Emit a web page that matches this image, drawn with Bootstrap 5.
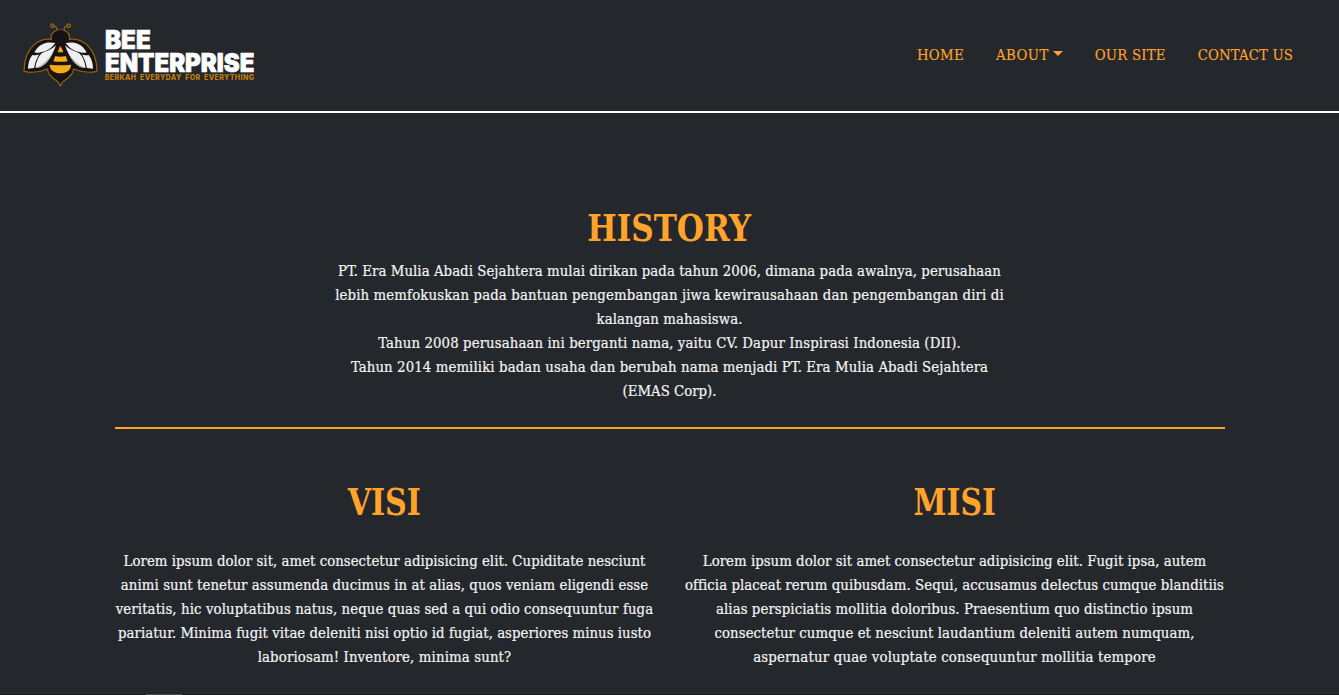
<!DOCTYPE html>
<html lang="id">
<head>
<meta charset="utf-8">
<meta name="viewport" content="width=device-width, initial-scale=1">
<title>Bee Enterprise</title>
<link href="https://cdn.jsdelivr.net/npm/bootstrap@5.3.0/dist/css/bootstrap.min.css" rel="stylesheet">
<style>
:root{--ink:#24272b;--honey:#ffa32b}
body{background:var(--ink);color:#f4f4f4;font-family:"DejaVu Serif Condensed","DejaVu Serif",serif;font-stretch:condensed;font-size:14.8px;line-height:24px;height:695px;overflow:hidden}
.site-nav{height:113px;border-bottom:2px solid #fff;padding:0 30px 0 10px}
.site-nav .nav{margin-top:43px}
.brand-logo{width:250px;height:90px;margin-top:10px;overflow:visible}
.site-nav .nav-link{color:var(--honey);padding:0 16px;font-size:14.8px;line-height:24px;letter-spacing:.2px;-webkit-text-stroke:.15px}
.site-nav .nav-home{letter-spacing:.3px}
.site-nav .nav-about{letter-spacing:.4px}
.site-nav .nav-contact{letter-spacing:.12px}
.site-nav .dropdown-toggle::after{margin-left:4px;vertical-align:4px;border-top-width:5px;border-left-width:5px;border-right-width:5px}
.section-title{font-weight:700;color:var(--honey);font-size:36.8px;line-height:48px;margin:0}
.section-title span{display:inline-block;transform:translateY(1px) scaleX(.94)}
.section-title .title-visi{transform:translateY(1px) scaleX(.91)}
.section-title .title-misi{transform:translateY(1px) scaleX(.9)}
.history{padding-top:90px}
.page-wrap{--bs-gutter-x:30px}
.page-wrap .row{--bs-gutter-x:30px}
.copy{-webkit-text-stroke:.2px}
.copy span{display:block;white-space:nowrap}
.rule{border:0;border-top:2px solid var(--honey);opacity:1;margin:24px 0 48px}
.s15{letter-spacing:0}.s17{letter-spacing:.03px}.s19{letter-spacing:.045px}.s20{letter-spacing:.05px}
.s22{letter-spacing:.075px}.s24{letter-spacing:.1px}.s28{letter-spacing:.13px}.s33{letter-spacing:.185px}
.page-foot{height:1px;background:#1b1b1d;padding-left:146px}
.page-foot div{width:36px;height:1px;background:#4c4c4e}
</style>
</head>
<body class="d-flex flex-column">
<nav class="site-nav d-flex justify-content-between align-items-start flex-shrink-0">
<a href="#" aria-label="Bee Enterprise">
<svg class="brand-logo d-block" viewBox="0 0 750 270">
<g stroke-linejoin="round" stroke-linecap="round">
<g fill="none" stroke="#94650f" stroke-width="4">
<circle cx="127" cy="47" r="5"/><circle cx="176" cy="47" r="5"/>
<path d="M132 49Q141 48 141 61M171 49Q162 48 162 61"/>
</g>
<path fill="#171413" stroke="#94650f" stroke-width="3.5" d="M124 88C117 50 185 50 178 88C211 83 260 107 261 184C239 189 218 188 190 177C191 195 171 206 160 214Q154 219 151 228Q148 219 142 214C131 206 112 195 113 177C87 188 65 189 42 184C43 107 91 83 124 88Z"/>
<circle cx="151" cy="85" r="25" fill="#171215"/>
<g fill="#f0f0f1">
<path d="M136 99C114 94 88 98 73 127Q82 130 92 127Q119 123 136 99Z"/>
<path d="M138 106C124 120 107 123 95 130Q81 143 76 173C103 174 125 144 138 106Z"/>
<path d="M67 135Q81 137 87 133Q77 150 72 174L54 176Q54 152 67 135Z"/>
<path d="M167 99C189 94 215 98 230 127Q221 130 211 127Q184 123 167 99Z"/>
<path d="M165 106C179 120 196 123 208 130Q222 143 227 173C200 174 178 144 165 106Z"/>
<path d="M236 135Q222 137 216 133Q226 150 231 174L249 176Q249 152 236 135Z"/>
</g>
<g fill="#b9babd"><path d="M76 173C94 168 115 149 129 125C120 150 101 175 76 173Z"/><path d="M227 173C209 168 188 149 174 125C183 150 202 175 227 173Z"/></g>
<g fill="#f8aa16">
<path d="M151 108Q158 119 160 127H143Q145 119 151 108Z"/>
<path d="M136 138Q151 142 167 138L173 154Q151 157 130 154Z"/>
<path d="M119 164Q151 168 183 164C183 181 169 189 151 190C134 189 119 181 119 164Z"/>
</g>
</g>
<g font-family="Inter,sans-serif" font-weight="900" fill="#fff">
<text x="285" y="118" font-size="76" stroke="#fff" stroke-width="2" textLength="137" lengthAdjust="spacingAndGlyphs">BEE</text>
<text x="285" y="185" font-size="76" stroke="#fff" stroke-width="2" textLength="448" lengthAdjust="spacingAndGlyphs">ENTERPRISE</text>
<text x="284" y="209" font-size="22" font-weight="800" fill="#c27f08" word-spacing="5" letter-spacing="1.2" textLength="449" lengthAdjust="spacingAndGlyphs">BERKAH EVERYDAY FOR EVERYTHING</text>
</g>
</svg></a>
<ul class="nav flex-nowrap">
<li class="nav-item"><a class="nav-link nav-home" href="#">HOME</a></li>
<li class="nav-item"><a class="nav-link nav-about dropdown-toggle" href="#">ABOUT</a></li>
<li class="nav-item"><a class="nav-link" href="#">OUR SITE</a></li>
<li class="nav-item"><a class="nav-link nav-contact" href="#">CONTACT US</a></li>
</ul>
</nav>
<main class="container page-wrap flex-grow-1 text-center">
<section class="history">
<h1 class="section-title mb-2"><span>HISTORY</span></h1>
<p class="copy m-0">
<span class="s19">PT. Era Mulia Abadi Sejahtera mulai dirikan pada tahun 2006, dimana pada awalnya, perusahaan</span>
<span class="s28">lebih memfokuskan pada bantuan pengembangan jiwa kewirausahaan dan pengembangan diri di</span>
<span class="s22">kalangan mahasiswa.</span>
<span class="s24">Tahun 2008 perusahaan ini berganti nama, yaitu CV. Dapur Inspirasi Indonesia (DII).</span>
<span class="s24">Tahun 2014 memiliki badan usaha dan berubah nama menjadi PT. Era Mulia Abadi Sejahtera</span>
<span class="s15">(EMAS Corp).</span></p>
</section>
<hr class="rule">
<div class="row">
<section class="col-6">
<h1 class="section-title mb-4"><span class="title-visi">VISI</span></h1>
<p class="copy m-0">
<span class="s17">Lorem ipsum dolor sit, amet consectetur adipisicing elit. Cupiditate nesciunt</span>
<span class="s22">animi sunt tenetur assumenda ducimus in at alias, quos veniam eligendi esse</span>
<span class="s24">veritatis, hic voluptatibus natus, neque quas sed a qui odio consequuntur fuga</span>
<span class="s17">pariatur. Minima fugit vitae deleniti nisi optio id fugiat, asperiores minus iusto</span>
<span class="s28">laboriosam! Inventore, minima sunt?</span></p>
</section>
<section class="col-6">
<h1 class="section-title mb-4"><span class="title-misi">MISI</span></h1>
<p class="copy m-0">
<span class="s17">Lorem ipsum dolor sit amet consectetur adipisicing elit. Fugit ipsa, autem</span>
<span class="s20">officia placeat rerum quibusdam. Sequi, accusamus delectus cumque blanditiis</span>
<span class="s22">alias perspiciatis mollitia doloribus. Praesentium quo distinctio ipsum</span>
<span class="s22">consectetur cumque et nesciunt laudantium deleniti autem numquam,</span>
<span class="s33">aspernatur quae voluptate consequuntur mollitia tempore</span></p>
</section>
</div>
</main>
<footer class="page-foot flex-shrink-0"><div></div></footer>
<script src="https://cdn.jsdelivr.net/npm/bootstrap@5.3.0/dist/js/bootstrap.bundle.min.js"></script>
</body>
</html>
